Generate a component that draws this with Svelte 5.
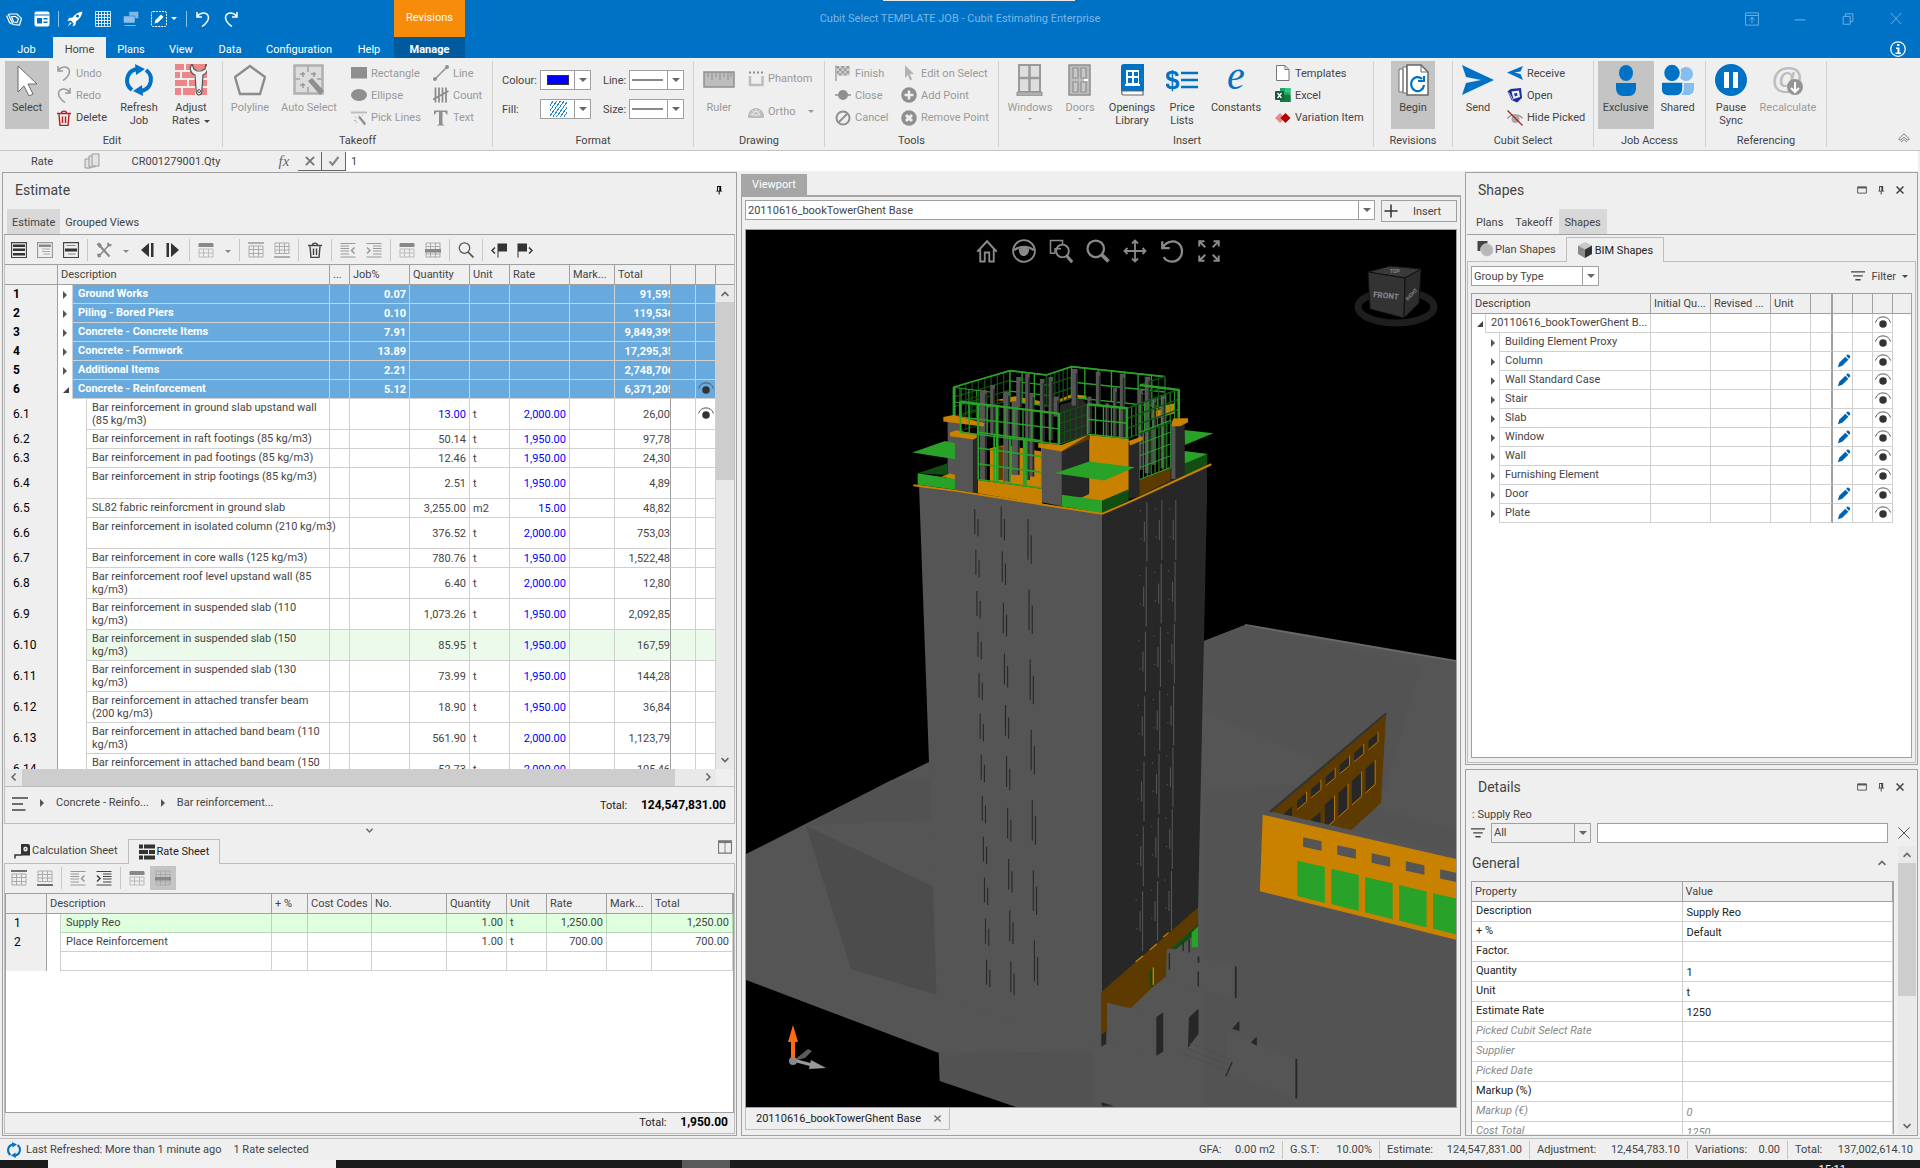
<script lang="ts">
    const icons: Record<string, string> = {
        // title bar
        logo: `<g fill="none" stroke="#fff" stroke-width="2.400"><path d="M1 9l6 14 4 3M5 7l9 20 13 1 4-13-9-9-13 0z"/><path d="M11 11l8 0 6 5-3 7-7-1z"/></g>`,
        form: `<rect x="1" y="1" width="30" height="30" rx="4" fill="#fff"/><path d="M1 8h30" stroke="#0072c6" stroke-width="2"/><path d="M6 14h10v11H6zM19 14h8v3h-8zM19 21h8v3h-8z" fill="#0072c6"/>`,
        rocket: `<path d="M31 1C22 2 16 6 11 13L4 14 1 20l7-1 5 6-2 6 6-3 1-7C25 16 30 10 31 1z" fill="#fff"/><circle cx="21" cy="10" r="3" fill="#0072c6"/><path d="M7 22l-6 9 8-6z" fill="#fff"/>`,
        gridw: `<path d="M1 1h30v30H1zM7 1v30M13 1v30M19 1v30M25 1v30M1 7h30M1 13h30M1 19h30M1 25h30" fill="none" stroke="#fff" stroke-width="1.6"/>`,
        cascade: `<path d="M12 1h19v14H12z" fill="#7fb8e2" stroke="#0072c6"/><path d="M1 10h23v14H1z" fill="#8cc0e6" stroke="#0072c6"/><path d="M3 29h22" stroke="#7fb8e2" stroke-width="2"/>`,
        pencilbox: `<rect x="1" y="1" width="30" height="30" rx="3" fill="none" stroke="#fff" stroke-width="2" stroke-dasharray="4 2"/><path d="M7 25l2-7L20 7l5 5-11 11z" fill="#fff"/>`,
        undo: `<path d="M4 2v10h10M4 12C10 2 22 2 26 9c3 7-1 14-12 22" fill="none" stroke="currentColor" stroke-width="3"/>`,
        redo: `<path d="M28 2v10H18M28 12C22 2 10 2 6 9c-3 7 1 14 12 22" fill="none" stroke="currentColor" stroke-width="3"/>`,
        // ribbon
        select: `<path d="M7 2v26l6-6 5 10 4-2-5-10h9z" fill="#fff" stroke="#6a6a6a"/>`,
        refresh: `<g fill="none" stroke="#0072c6" stroke-width="4"><path d="M13 5C3 8 1 20 9 26M19 27c10-3 12-15 4-21"/></g><path d="M12 0l10 5-9 6zM20 32l-10-5 9-6z" fill="#0072c6"/>`,
        bricks: `<path d="M0 0h9v6H0zM11 0h21v6H11zM0 8h5v6H0zM7 8h12v6H7zM24 8h8v6h-8zM0 16h12v6H0zM14 16h18v6H14zM0 24h6v7H0zM8 24h12v7H8zM25 24h7v7h-7z" fill="#eb8787"/><path d="M17 0c-3 4-2 9 3 11l1 14c0 8 6 8 6 0l1-14c5-2 6-7 3-11l-1 5-4 2h-4l-3-2z" fill="#efefef" stroke="#555" stroke-width="1.2"/><circle cx="24" cy="27" r="1.5" fill="none" stroke="#555"/>`,
        polyline: `<path d="M16 2l15 11-5 17H6L1 13z" fill="none" stroke="#8c8c8c" stroke-width="2.4"/>`,
        autoselect: `<rect x="1.500" y="1.500" width="28" height="28" fill="#dcdcdc" stroke="#b0b0b0" stroke-width="2.500"/><path d="M15 2v6M15 23v6M2 15h5M24 15h6" stroke="#b0b0b0" stroke-width="2"/><path d="M15 17l4-3 12 13-4 4z" fill="#8f8f8f"/><path d="M10 8v5M7 10h5M21 8v5M18 10h5M10 19v5M7 21h5" stroke="#9a9a9a" stroke-width="1.500"/>`,
        rect: `<path d="M0 4h32v23H0z" fill="#8f8f8f"/>`,
        ellipse: `<ellipse cx="16" cy="16" rx="16" ry="12" fill="#8f8f8f"/>`,
        picklines: `<path d="M0 3h32v4H0z" fill="#bdbdbd"/><path d="M14 15l4-3 12 15-3 4z" fill="#8f8f8f"/><path d="M8 13l3 3M16 10v3M6 21h4M22 12l2-2M10 26l2-3" stroke="#b0b0b0" stroke-width="2"/>`,
        line: `<path d="M4 28L28 4" stroke="#8f8f8f" stroke-width="3"/><circle cx="4" cy="28" r="4" fill="#8f8f8f"/><circle cx="28" cy="4" r="4" fill="#8f8f8f"/>`,
        count: `<path d="M5 1v30M12 1v30M19 1v30M26 1v30M0 25L31 8" stroke="#8a8a8a" stroke-width="3.500"/>`,
        text: `<path d="M2 1h27v8h-2c-1-4-3-5-6-5h-2v22c0 3 1 4 4 4v1H8v-1c3 0 4-1 4-4V4h-2C7 4 5 5 4 9H2z" fill="#8f8f8f"/>`,
        trash: `<path d="M6 9l2 22h16l2-22M2 7h28M11 6c0-5 10-5 10 0M13 13v13M19 13v13" fill="none" stroke="currentColor" stroke-width="2.800"/>`,
        ruler: `<path d="M1 8h30v15H1z" fill="#bdbdbd" stroke="#8f8f8f" stroke-width="1.500"/><path d="M5 8v5M9 8v8M13 8v5M17 8v8M21 8v5M25 8v8M28 8v5" stroke="#8f8f8f"/>`,
        phantom: `<path d="M4 10v18h25V10" fill="none" stroke="#bdbdbd" stroke-width="5"/><path d="M2 3h30" stroke="#8f8f8f" stroke-width="4" stroke-dasharray="4 4"/>`,
        ortho: `<path d="M1 24a15 15 0 0 1 30 0v3H1z" fill="#bdbdbd" stroke="#a0a0a0"/><path d="M9 22a7 7 0 0 1 14 0zM5 20l3 1M9 13l2 3M16 10v4M23 13l-2 3" fill="none" stroke="#efefef" stroke-width="2"/>`,
        flag: `<path d="M2 1v31" stroke="#8f8f8f" stroke-width="2.500"/><path d="M3 2h27v19H3z" fill="#d0d0d0"/><path d="M3 2h5v5H3zM13 2h5v5h-5zM23 2h5v5h-5zM8 7h5v5H8zM18 7h5v5h-5zM3 12h5v5H3zM13 12h5v5h-5zM23 12h5v5h-5zM8 17h5v4H8zM18 17h5v4h-5z" fill="#9a9a9a"/>`,
        closept: `<path d="M0 16h32" stroke="#a8a8a8" stroke-width="4"/><circle cx="16" cy="16" r="10" fill="#8f8f8f"/>`,
        cancel: `<circle cx="16" cy="16" r="13" fill="none" stroke="#8f8f8f" stroke-width="4"/><path d="M7 25L25 7" stroke="#8f8f8f" stroke-width="4"/>`,
        cursor: `<path d="M8 0v26l6-6 4 11 4-2-4-11h8z" fill="#b3b3b3"/>`,
        addpt: `<circle cx="16" cy="16" r="15.500" fill="#8f8f8f"/><path d="M16 7v18M7 16h18" stroke="#efefef" stroke-width="5"/>`,
        rempt: `<circle cx="16" cy="16" r="15.500" fill="#8f8f8f"/><path d="M10 10l12 12M22 10L10 22" stroke="#efefef" stroke-width="6"/>`,
        windows: `<path d="M5 1h21v27H5z" fill="#dedede" stroke="#9a9a9a" stroke-width="2"/><path d="M15.500 1v27M5 14h21" stroke="#9a9a9a" stroke-width="2.500"/><path d="M3 28h25v4H3z" fill="#b0b0b0" stroke="#8f8f8f"/>`,
        doors: `<path d="M5 1h21v30H5z" fill="#bdbdbd" stroke="#8f8f8f" stroke-width="1.500"/><path d="M9 4h5v10H9zM17 4h5v10h-5zM9 18h5v10H9zM17 18h5v10h-5z" fill="#c8c8c8" stroke="#8f8f8f" stroke-width="1.200"/><path d="M20 15h4v2h-4z" fill="#fff"/>`,
        openings: `<path d="M5 3c0-2 1-3 3-3h20v27H5z" fill="#0072c6"/><path d="M6 27h21v4H8c-2 0-3-2-2-4z" fill="#fff" stroke="#666" stroke-width="1.200"/><path d="M10 6h13v14H10z" fill="#fff"/><path d="M12 8h4v4h-4zM18 8h4v4h-4zM12 14h4v5h-4zM18 14h4v5h-4z" fill="#0072c6"/><path d="M9 20h15v2H9z" fill="#fff"/>`,
        price: `<text x="-1" y="25" font-family="Liberation Sans, sans-serif" font-weight="700" font-size="26" fill="#0072c6">$</text><path d="M15 9h17M15 16h17M15 23h17" stroke="#0072c6" stroke-width="2.500"/>`,
        constants: `<text x="16" y="25" text-anchor="middle" font-family="Liberation Serif, serif" font-style="italic" font-size="40" fill="#0072c6">e</text>`,
        template: `<path d="M3 1h17l8 8v22H3z" fill="#fff" stroke="#777" stroke-width="2"/><path d="M20 1v8h8" fill="none" stroke="#777" stroke-width="2"/>`,
        excel: `<path d="M10 2h21v28H10z" fill="#21a366"/><path d="M20 2h11v9H20zM10 20h21v10H10z" fill="#33c481"/><path d="M10 16h21v14H10z" fill="#107c41"/><rect x="0" y="8" width="18" height="18" rx="2" fill="#185c37"/><path d="M5 12l8 10M13 12L5 22" stroke="#fff" stroke-width="2.500"/>`,
        variation: `<path d="M10 6l10 10-10 10L0 16z" fill="#eb8787"/><path d="M21 6l10 10-10 10-10-10z" fill="#b40000"/>`,
        begin: `<path d="M2 5h4v23H2zM6 3h4v26H6z" fill="#fff" stroke="#777"/><path d="M10 1h14l7 7v23H10z" fill="#fff" stroke="#666" stroke-width="1.500"/><path d="M24 1v7h7" fill="none" stroke="#666"/><path d="M25 15a6.500 7 0 1 0 2 6M27 12v5h-6" fill="none" stroke="#0072c6" stroke-width="2.200"/>`,
        send: `<path d="M0 1l32 15L0 31l4-12 15-3-15-3z" fill="#0072c6"/>`,
        receive: `<path d="M32 2L0 15l32 15-5-12-12-3 12-2z" fill="#0072c6"/>`,
        open: `<path d="M1 9l6-5 21-2 2 20-10 9-11-5z" fill="#1b2f9c"/><path d="M9 9l15-2 2 13-13 4z" fill="#efefef"/><path d="M14 13l6-1 1 5-5 2z" fill="#1b2f9c"/><path d="M3 11l9 15" stroke="#efefef" stroke-width="1.500"/>`,
        hide: `<path d="M1 17c6-10 24-10 30 0" fill="none" stroke="#8f8f8f" stroke-width="2.500"/><circle cx="17" cy="18" r="8" fill="#a8a8a8"/><path d="M1 1l30 30" stroke="#b81c1c" stroke-width="2.500"/>`,
        exclusive: `<ellipse cx="16" cy="9" rx="7" ry="8" fill="#0072c6"/><path d="M6 19h20v5c0 5-3 8-7 8h-6c-4 0-7-3-7-8z" fill="#0072c6"/>`,
        shared: `<ellipse cx="24" cy="10" rx="7" ry="7" fill="#86bdee"/><path d="M17 19h15v5c0 5-3 7-6 7h-9z" fill="#86bdee"/><ellipse cx="10" cy="9" rx="8.500" ry="9" fill="#0072c6" stroke="#efefef" stroke-width="1.500"/><path d="M-1 18h22v6c0 5-3 8-7 8H6c-4 0-7-3-7-8z" fill="#0072c6" stroke="#efefef" stroke-width="1.500"/>`,
        pause: `<circle cx="16" cy="16" r="16" fill="#0072c6"/><path d="M9 8h5v16H9zM18 8h5v16h-5z" fill="#fff"/>`,
        recalc: `<text x="15" y="25" text-anchor="middle" font-family="Liberation Sans, sans-serif" font-weight="700" font-size="32" fill="#bdbdbd">@</text><circle cx="23" cy="23" r="8" fill="#949494"/><path d="M23 18v9M19 24l4 4 4-4" stroke="#fff" stroke-width="2" fill="none"/>`,
        copy: `<g fill="#e4e4e4" stroke="#999" stroke-width="2"><path d="M2 12h12v18H2z"/><path d="M10 6h12v22H10z"/><path d="M16 2h14v24H16z"/></g>`,
        // grid toolbars
        rows: `<path d="M1 1h30v30H1z" fill="none" stroke="#444" stroke-width="2.500"/><path d="M4 5h24v5H4zM4 13h24v5H4zM4 22h24v5H4z" fill="#333"/>`,
        rowtop: `<path d="M1 1h30v30H1z" fill="none" stroke="#999" stroke-width="2.500"/><path d="M4 5h24v5H4z" fill="#888"/><path d="M10 14h16M10 19h16M13 24h13" stroke="#aaa" stroke-width="2"/>`,
        rowmid: `<path d="M1 1h30v30H1z" fill="none" stroke="#444" stroke-width="2.500"/><path d="M4 13h24v6H4z" fill="#333"/><path d="M7 7h18M10 24h15" stroke="#888" stroke-width="2"/>`,
        tools: `<path d="M7 7l20 22" stroke="#888" stroke-width="4"/><path d="M27 5L6 28" stroke="#888" stroke-width="3"/><path d="M1 4l6-3 5 6-5 5zM22 1l1 7 7 1 2-5-4 1-2-3zM2 24l6-1 2 7-6 1z" fill="#888"/>`,
        prev: `<path d="M20 2v28L4 16zM24 2h5v28h-5z" fill="#333"/>`,
        next: `<path d="M12 2v28l16-14zM3 2h5v28H3z" fill="#333"/>`,
        tblhead: `<path d="M1 10V5c0-2 1-3 3-3h24c2 0 3 1 3 3v5z" fill="#888"/><path d="M2 14h28v16H2zM2 22h28M11 14v16M21 14v16" fill="none" stroke="#bbb" stroke-width="2"/>`,
        tbltop: `<path d="M0 2h32" stroke="currentColor" stroke-width="3"/><path d="M2 8h28v22H2zM2 15h28M2 23h28M11 8v22M21 8v22" fill="none" stroke="#aaa" stroke-width="2"/>`,
        tblbot: `<path d="M0 30h32" stroke="currentColor" stroke-width="3"/><path d="M2 2h28v21H2zM2 9h28M2 16h28M11 2v21M21 2v21" fill="none" stroke="#aaa" stroke-width="2"/>`,
        outdent: `<path d="M1 3h30M1 30h30M1 8h17M1 13h17M1 18h17M1 24h17" stroke="currentColor" stroke-width="2.400"/><path d="M29 11l-6 6 6 6" fill="none" stroke="currentColor" stroke-width="3"/>`,
        indent: `<path d="M1 3h30M1 30h30M14 8h17M14 13h17M14 18h17M14 24h17" stroke="currentColor" stroke-width="2.400"/><path d="M2 11l6 6-6 6" fill="none" stroke="currentColor" stroke-width="3"/>`,
        tblmid: `<path d="M2 2h28v28H2zM2 9h28M2 24h28M11 2v28M21 2v28" fill="none" stroke="#aaa" stroke-width="2"/><path d="M0 14h32v7H0z" fill="#888"/>`,
        find: `<circle cx="13" cy="12" r="10.500" fill="none" stroke="#555" stroke-width="2.500"/><path d="M20 20l11 11" stroke="#555" stroke-width="3.500"/>`,
        flagl: `<path d="M13 3h19v16H15v12h-2z" fill="#333"/><path d="M8 11l-6 6 6 6" fill="none" stroke="#333" stroke-width="3"/>`,
        flagr: `<path d="M1 3h19v16H3v12H1z" fill="#333"/><path d="M24 11l6 6-6 6" fill="none" stroke="#333" stroke-width="3"/>`,
        tape: `<path d="M14 2h14c2 0 4 2 4 4v19H14z" fill="#333"/><ellipse cx="23" cy="12" rx="4.500" ry="5" fill="#efefef"/><circle cx="23" cy="12" r="1.500" fill="#333"/><path d="M2 31v-7h13" fill="none" stroke="#333" stroke-width="3"/>`,
        brick: `<path d="M0 1h8v8H0zM10 1h22v8H10zM0 12h18v8H0zM20 12h12v8H20zM0 23h8v8H0zM10 23h22v8H10z" fill="#333"/>`,
        cols: `<path d="M1 2h30v28H1z" fill="none" stroke="#777" stroke-width="3"/><path d="M1 2h30v5H1z" fill="#777"/><path d="M16 4v26" stroke="#777" stroke-width="2"/>`,
        planshapes: `<path d="M1 0h20v20H1z" fill="#444"/><circle cx="20" cy="18" r="13" fill="#b8b8b8" stroke="#efefef"/>`,
        cube: `<path d="M16 0l14 7-14 8L2 7z" fill="#c8c8c8"/><path d="M2 7l14 8v17L2 24z" fill="#8a8a8a"/><path d="M30 7L16 15v17l14-8z" fill="#333"/>`,
        filter: `<path d="M0 5h32v3H0zM5 14h22v3H5zM10 23h12v3H10z" fill="#444"/>`,
        menu: `<path d="M0 4h32M0 16h22M0 28h27" stroke="#444" stroke-width="3"/>`,
        eye: `<path d="M1 15c4-15 26-15 30 0" fill="none" stroke="#555" stroke-width="2"/><circle cx="16" cy="18" r="7.500" fill="#333"/>`,
        edit: `<path d="M2 30l3-10L19 6l7 7-14 14zM21 4l3-3c2-1 8 4 6 7l-3 3z" fill="#0063b1"/>`,
        pin: `<path d="M10 3h13v15h3v3h-8v9h-3v-9H7v-3h3z" fill="currentColor"/><path d="M13 6h4v12h-4z" fill="#efefef"/>`,
        max: `<path d="M2 6h28v20H2z" fill="none" stroke="#555" stroke-width="3"/><path d="M2 6h28v5H2z" fill="#555"/>`,
        x: `<path d="M5 5l22 22M27 5L5 27" stroke="currentColor" stroke-width="5"/>`,
        xthin: `<path d="M1 1l30 30M31 1L1 31" stroke="#444" stroke-width="2.400"/>`,
        check: `<path d="M4 17l8 9L28 5" fill="none" stroke="#888" stroke-width="6"/>`,
        up: `<path d="M5 22l11-11 11 11" fill="none" stroke="#666" stroke-width="5"/>`,
        down: `<path d="M5 10l11 11 11-11" fill="none" stroke="#666" stroke-width="5"/>`,
        left: `<path d="M21 5L10 16l11 11" fill="none" stroke="#666" stroke-width="5"/>`,
        right: `<path d="M11 5l11 11-11 11" fill="none" stroke="#666" stroke-width="5"/>`,
        plus: `<path d="M16 1v30M1 16h30" stroke="#333" stroke-width="3.500"/>`,
        collapse: `<path d="M3 17L16 5l13 12M3 17v4h5l8-7 8 7h5v-4M8 27l8-7 8 7" fill="none" stroke="#777" stroke-width="2.500"/>`,
        info: `<circle cx="16" cy="16" r="14.500" fill="none" stroke="#fff" stroke-width="2.500"/><path d="M14 6h5v4h-5zM12 13h7v10h3v3H11v-3h4v-7h-3z" fill="#fff"/>`,
        wribbon: `<path d="M1 2h30v28H1zM1 8h30M16 26V12M10 18l6-6 6 6" fill="none" stroke="#6fb1e3" stroke-width="2.200"/>`,
        wmin: `<path d="M4 18h24" stroke="#6fb1e3" stroke-width="2.400"/>`,
        wmax: `<path d="M5 10h16v18H5zM10 10V4h17v18h-6" fill="none" stroke="#6fb1e3" stroke-width="2.200"/>`,
        wclose: `<path d="M4 2l24 26M28 2L4 28" stroke="#6fb1e3" stroke-width="2.200"/>`,
        // viewport overlay
        home: `<path d="M3 17L16 3l13 14M7 14v16h6V18h6v12h6V14" fill="none" stroke="#8a8a8a" stroke-width="2.500"/>`,
        look: `<circle cx="16" cy="16" r="14.500" fill="none" stroke="#8a8a8a" stroke-width="2.500"/><path d="M3 15c7-6 19-6 26 0" fill="none" stroke="#8a8a8a" stroke-width="3"/><path d="M9 13c5-2 9-2 14 0 0 12-14 14-14 0z" fill="#8a8a8a"/>`,
        zoomwin: `<path d="M8 19H2V2h16v5M8 19v-6h8" fill="none" stroke="#8a8a8a" stroke-width="2"/><circle cx="18" cy="16" r="8.500" fill="none" stroke="#8a8a8a" stroke-width="2.500"/><path d="M24 23l7 8" stroke="#8a8a8a" stroke-width="4"/>`,
        zoom: `<circle cx="13" cy="13" r="11" fill="none" stroke="#8a8a8a" stroke-width="3"/><path d="M21 21l9 9" stroke="#8a8a8a" stroke-width="5"/>`,
        move: `<path d="M16 2v28M2 16h28M12 6l4-4 4 4M12 26l4 4 4-4M6 12l-4 4 4 4M26 12l4 4-4 4" fill="none" stroke="#8a8a8a" stroke-width="2.400"/>`,
        rotate: `<path d="M3 3v9h10M4 11C9 2 22 0 28 10c4 10-2 20-12 20-6 0-9-2-11-6" fill="none" stroke="#8a8a8a" stroke-width="3"/>`,
        fit: `<path d="M3 10V3h7M3 3l8 8M22 3h7v7M29 3l-8 8M3 22v7h7M3 29l8-8M29 22v7h-7M29 29l-8-8" fill="none" stroke="#8a8a8a" stroke-width="2.600"/>`,
    };

    const quickAccess = ["logo", "form", "|", "rocket", "gridw", "cascade", "pencilbox", "v", "|", "undo", "redo"];

    const tabs = [
        { name: "Job", w: 53 },
        { name: "Home", w: 53 },
        { name: "Plans", w: 50 },
        { name: "View", w: 50 },
        { name: "Data", w: 48 },
        { name: "Configuration", w: 90 },
        { name: "Help", w: 50 },
        { name: "Manage", w: 71 },
    ];

    const estimateTools = ["rows", "rowtop", "rowmid", "|", "tools", "v", "prev", "next", "|", "tblhead", "v", "|", "tbltop", "tblbot", "|", "trash", "|", "outdent", "indent", "|", "tblhead", "tblmid", "|", "find", "|", "flagl", "flagr"];
    const rateTools = ["tbltop", "tblbot", "|", "outdent", "indent", "|", "tblhead", "tblmid"];
    const darkTools = ["trash"];
    const rateDark = ["tbltop", "tblbot", "indent"];

    const groups = [
        { n: 1, name: "Ground Works", job: "0.07", total: "91,595" },
        { n: 2, name: "Piling - Bored Piers", job: "0.10", total: "119,536" },
        { n: 3, name: "Concrete - Concrete Items", job: "7.91", total: "9,849,399" },
        { n: 4, name: "Concrete - Formwork", job: "13.89", total: "17,295,35" },
        { n: 5, name: "Additional Items", job: "2.21", total: "2,748,706" },
        { n: 6, name: "Concrete - Reinforcement", job: "5.12", total: "6,371,205", open: true },
    ];

    const items = [
        { n: "6.1", name: "Bar reinforcement in ground slab upstand wall (85 kg/m3)", qty: "13.00", unit: "t", rate: "2,000.00", total: "26,00", tall: true, eye: true },
        { n: "6.2", name: "Bar reinforcement in raft footings (85 kg/m3)", qty: "50.14", unit: "t", rate: "1,950.00", total: "97,78" },
        { n: "6.3", name: "Bar reinforcement in pad footings (85 kg/m3)", qty: "12.46", unit: "t", rate: "1,950.00", total: "24,30" },
        { n: "6.4", name: "Bar reinforcement in strip footings (85 kg/m3)", qty: "2.51", unit: "t", rate: "1,950.00", total: "4,89", tall: true, single: true },
        { n: "6.5", name: "SL82 fabric reinforcment in ground slab", qty: "3,255.00", unit: "m2", rate: "15.00", total: "48,82" },
        { n: "6.6", name: "Bar reinforcement in isolated column (210 kg/m3)", qty: "376.52", unit: "t", rate: "2,000.00", total: "753,03", tall: true, single: true },
        { n: "6.7", name: "Bar reinforcement in core walls (125 kg/m3)", qty: "780.76", unit: "t", rate: "1,950.00", total: "1,522,48" },
        { n: "6.8", name: "Bar reinforcement roof level upstand wall (85 kg/m3)", qty: "6.40", unit: "t", rate: "2,000.00", total: "12,80", tall: true },
        { n: "6.9", name: "Bar reinforcement in suspended slab (110 kg/m3)", qty: "1,073.26", unit: "t", rate: "1,950.00", total: "2,092,85", tall: true },
        { n: "6.10", name: "Bar reinforcement in suspended slab (150 kg/m3)", qty: "85.95", unit: "t", rate: "1,950.00", total: "167,59", tall: true, active: true },
        { n: "6.11", name: "Bar reinforcement in suspended slab (130 kg/m3)", qty: "73.99", unit: "t", rate: "1,950.00", total: "144,28", tall: true },
        { n: "6.12", name: "Bar reinforcement in attached transfer beam (200 kg/m3)", qty: "18.90", unit: "t", rate: "1,950.00", total: "36,84", tall: true },
        { n: "6.13", name: "Bar reinforcement in attached band beam (110 kg/m3)", qty: "561.90", unit: "t", rate: "2,000.00", total: "1,123,79", tall: true },
        { n: "6.14", name: "Bar reinforcement in attached band beam (150 kg/m3)", qty: "52.73", unit: "t", rate: "2,000.00", total: "105,46", tall: true },
    ];

    const shapes = [
        { name: "Building Element Proxy" },
        { name: "Column", edit: true },
        { name: "Wall Standard Case", edit: true },
        { name: "Stair" },
        { name: "Slab", edit: true },
        { name: "Window", edit: true },
        { name: "Wall", edit: true },
        { name: "Furnishing Element" },
        { name: "Door", edit: true },
        { name: "Plate", edit: true },
    ];

    const properties = [
        { name: "Description", value: "Supply Reo" },
        { name: "+ %", value: "Default" },
        { name: "Factor.", value: "" },
        { name: "Quantity", value: "1" },
        { name: "Unit", value: "t" },
        { name: "Estimate Rate", value: "1250" },
        { name: "Picked Cubit Select Rate", value: "", locked: true },
        { name: "Supplier", value: "", locked: true },
        { name: "Picked Date", value: "", locked: true },
        { name: "Markup (%)", value: "" },
        { name: "Markup (€)", value: "0", locked: true },
        { name: "Cost Total", value: "1250", locked: true },
    ];

    const totals = [
        { label: "GFA:", value: "0.00 m2", w: 90 },
        { label: "G.S.T:", value: "10.00%", w: 97 },
        { label: "Estimate:", value: "124,547,831.00", w: 150 },
        { label: "Adjustment:", value: "12,454,783.10", w: 158 },
        { label: "Variations:", value: "0.00", w: 100 },
        { label: "Total:", value: "137,002,614.10", w: 133 },
    ];

    // model geometry

    const GREEN = "#28a228";
    const DARK_GREEN = "#124d12";
    const ORANGE = "#c98200";
    const BROWN = "#5c3a00";
    const GREY = "#555";
    const DARK = "#272727";

    // railing panel between two posts: nv bays across, nh bays down
    const fence = (x1, y1, x2, y2, h, nv, nh) => {
        let d = "";
        for (let i = 0; i <= nv; i++) {
            const x = x1 + ((x2 - x1) * i) / nv;
            const y = y1 + ((y2 - y1) * i) / nv;
            d += `M${x} ${y}v${h}`;
        }
        for (let j = 0; j <= nh; j++) {
            const o = (h * j) / nh;
            d += `M${x1} ${y1 + o}L${x2} ${y2 + o}`;
        }
        return d;
    };

    const backFences = [
        { d: fence(145, 97, 315, 47, 88, 9, 3), c: DARK_GREEN, w: 4 },
        { d: fence(315, 47, 425, 60, 92, 3, 3), c: GREEN, w: 4 },
        { d: fence(425, 60, 500, 35, 95, 6, 3), c: DARK_GREEN, w: 4 },
        { d: fence(500, 35, 780, 65, 92, 7, 2), c: GREEN, w: 4 },
        { d: "M145 97L315 47L425 60L500 35L780 65", c: GREEN, w: 5 },
        { d: fence(705, 90, 780, 65, 92, 4, 3), c: DARK_GREEN, w: 4 },
        { d: fence(145, 97, 262, 112, 88, 5, 2), c: GREEN, w: 3 },
        { d: fence(166, 140, 262, 110, 88, 6, 2), c: DARK_GREEN, w: 3 },
        { d: "M148 97v88M166 140v88", c: GREEN, w: 8 },
    ];

    const frontFences = [
        { d: fence(166, 140, 462, 176, 92, 11, 2), c: GREEN, w: 4 },
        { d: fence(220, 232, 411, 258, 142, 4, 3), c: GREEN, w: 5 },
        { d: fence(462, 176, 548, 148, 92, 5, 3), c: DARK_GREEN, w: 4 },
        { d: fence(548, 148, 668, 160, 90, 5, 2), c: GREEN, w: 4 },
        { d: fence(668, 160, 822, 103, 90, 12, 3), c: GREEN, w: 3 },
        { d: fence(704, 232, 798, 196, 142, 8, 4), c: GREEN, w: 3 },
        { d: fence(668, 160, 822, 103, 90, 1, 3), c: DARK_GREEN, w: 4 },
        { d: "M705 90L822 105M166 140L462 176M548 148L668 160", c: GREEN, w: 7 },
        { d: "M462 174v94M666 158v92M277 150v230M358 250v140M220 150v90M822 103v86", c: GREEN, w: 8 },
    ];

    const masts = [
        [225, 105, 20, 270], [256, 90, 14, 150], [295, 110, 20, 270], [320, 140, 24, 220], [334, 66, 16, 90],
        [361, 55, 14, 320], [374, 115, 14, 250], [405, 72, 14, 190], [431, 66, 14, 190], [446, 125, 16, 60],
        [500, 42, 18, 110], [573, 50, 14, 100], [602, 145, 10, 100], [625, 98, 12, 145], [645, 56, 14, 190],
        [548, 125, 12, 110], [700, 105, 14, 240], [720, 65, 16, 290], [742, 130, 12, 200], [768, 120, 14, 220],
    ];

    const slits: { x: number; y: number; h: number }[] = [];
    for (const [x, y, step, len, drift] of [[208, 27, 123, 75, 3], [282, 0, 154, 92, 3], [357, 57, 211, 122, 3]]) {
        for (let i = 0; y + i * step < 1500; i++) {
            const sy = Math.max(y + i * step, 20);
            slits.push({ x: x + i * drift, y: sy, h: len });
            slits.push({ x: x + 9 + i * drift, y: sy + len * 0.4, h: len * 0.7 });
        }
    }

    const seams: { x: number; y: number; h: number }[] = [];
    for (const [x, start, end] of [[690, 5, 1370], [732, 0, 1335], [771, 0, 1300]]) {
        for (let i = 0; i < 7; i++) {
            const y = start + (i * (end - start)) / 7;
            seams.push({ x: x - i * 2, y, h: 180 });
            seams.push({ x: x - 7 - i * 2, y: y + 60, h: 60 });
            seams.push({ x: x - 18 - i * 2, y: y + 25, h: 4 });
            seams.push({ x: x - 16 - i * 2, y: y + 110, h: 4 });
        }
    }
</script>

{#snippet icon(name, cls = "")}
    <svg class="icon {cls}" viewBox="0 0 32 32" aria-hidden="true">{@html icons[name]}</svg>
{/snippet}

{#snippet big(name, label, cls = "", caret = false)}
    <button class="big {cls}">
        {@render icon(name)}
        <span>{label}{#if caret}<i class="caret"></i>{/if}</span>
    </button>
{/snippet}

{#snippet small(name, label, cls = "")}
    <button class="small {cls}">{@render icon(name)}{label}</button>
{/snippet}

{#snippet toolbar(names, dark, active)}
    <div class="toolbar">
        {#each names as name, i}
            {#if name === "|"}
                <i class="sep"></i>
            {:else if name === "v"}
                <button class="drop" aria-label="More"><i class="caret"></i></button>
            {:else}
                <button class="tool" class:dark={dark.includes(name)} class:active={i === active} aria-label={name}>{@render icon(name)}</button>
            {/if}
        {/each}
    </div>
{/snippet}

{#snippet windowButtons()}
    <div class="pane-buttons">
        <button aria-label="Maximise">{@render icon("max")}</button>
        <button aria-label="Pin">{@render icon("pin")}</button>
        <button aria-label="Close">{@render icon("x")}</button>
    </div>
{/snippet}

<div class="app">
    <header>
        <i class="edge"></i>
        <div class="titlebar">
            <div class="title-left">
                <div class="quick">
                    {#each quickAccess as name}
                        {#if name === "|"}
                            <i class="qsep"></i>
                        {:else if name === "v"}
                            <i class="caret"></i>
                        {:else}
                            <button aria-label={name}>{@render icon(name)}</button>
                        {/if}
                    {/each}
                </div>
                <span class="context">Revisions</span>
            </div>
            <h1>Cubit Select TEMPLATE JOB - Cubit Estimating Enterprise</h1>
            <div class="window-buttons">
                {#each ["wribbon", "wmin", "wmax", "wclose"] as name}
                    <button aria-label={name.slice(1)}>{@render icon(name)}</button>
                {/each}
            </div>
        </div>
        <nav>
            {#each tabs as tab}
                <button class:home={tab.name === "Home"} class:manage={tab.name === "Manage"} style="width: {tab.w}px">{tab.name}</button>
            {/each}
            <button class="info" aria-label="Info">{@render icon("info")}</button>
        </nav>
    </header>

    <div class="ribbon">
        <section class="g-edit">
            <div class="body">
                {@render big("select", "Select", "w44 on")}
                <div class="stack w64">
                    {@render small("undo", "Undo", "off")}
                    {@render small("redo", "Redo", "off")}
                    {@render small("trash", "Delete", "red")}
                </div>
                {@render big("refresh", "Refresh Job", "w52")}
                {@render big("bricks", "Adjust Rates", "w52", true)}
            </div>
            <h2>Edit</h2>
        </section>
        <section class="g-takeoff">
            <div class="body">
                {@render big("polyline", "Polyline", "w48 off")}
                {@render big("autoselect", "Auto Select", "w70 off")}
                <div class="stack w82">
                    {@render small("rect", "Rectangle", "off")}
                    {@render small("ellipse", "Ellipse", "off")}
                    {@render small("picklines", "Pick Lines", "off")}
                </div>
                <div class="stack">
                    {@render small("line", "Line", "off")}
                    {@render small("count", "Count", "off")}
                    {@render small("text", "Text", "off")}
                </div>
            </div>
            <h2>Takeoff</h2>
        </section>
        <section class="g-format">
            <div class="body format">
                <label for="colour">Colour:</label>
                <div class="combo swatch">
                    <select id="colour"></select><i class="arrow"></i><i class="fill-blue"></i>
                </div>
                <label for="line">Line:</label>
                <div class="combo swatch">
                    <select id="line"></select><i class="arrow"></i><i class="stroke"></i>
                </div>
                <label for="fill">Fill:</label>
                <div class="combo swatch">
                    <select id="fill"></select><i class="arrow"></i><i class="hatch"></i>
                </div>
                <label for="size">Size:</label>
                <div class="combo swatch">
                    <select id="size"></select><i class="arrow"></i><i class="stroke"></i>
                </div>
            </div>
            <h2>Format</h2>
        </section>
        <section class="g-drawing">
            <div class="body">
                {@render big("ruler", "Ruler", "w44 off")}
                <div class="stack two">
                    {@render small("phantom", "Phantom", "off")}
                    <button class="small off">{@render icon("ortho")}Ortho<i class="caret far"></i></button>
                </div>
            </div>
            <h2>Drawing</h2>
        </section>
        <section class="g-tools">
            <div class="body">
                <div class="stack w66">
                    {@render small("flag", "Finish", "off")}
                    {@render small("closept", "Close", "off")}
                    {@render small("cancel", "Cancel", "off")}
                </div>
                <div class="stack">
                    {@render small("cursor", "Edit on Select", "off")}
                    {@render small("addpt", "Add Point", "off")}
                    {@render small("rempt", "Remove Point", "off")}
                </div>
            </div>
            <h2>Tools</h2>
        </section>
        <section class="g-insert">
            <div class="body">
                {@render big("windows", "Windows", "w52 off under", true)}
                {@render big("doors", "Doors", "w48 off under", true)}
                {@render big("openings", "Openings Library", "w56")}
                {@render big("price", "Price Lists", "w44")}
                {@render big("constants", "Constants", "w64")}
                <div class="stack">
                    {@render small("template", "Templates")}
                    {@render small("excel", "Excel")}
                    {@render small("variation", "Variation Item")}
                </div>
            </div>
            <h2>Insert</h2>
        </section>
        <section class="g-revisions">
            <div class="body">{@render big("begin", "Begin", "w44 on")}</div>
            <h2>Revisions</h2>
        </section>
        <section class="g-cubit">
            <div class="body">
                {@render big("send", "Send", "w44")}
                <div class="stack">
                    {@render small("receive", "Receive")}
                    {@render small("open", "Open")}
                    {@render small("hide", "Hide Picked")}
                </div>
            </div>
            <h2>Cubit Select</h2>
        </section>
        <section class="g-access">
            <div class="body">
                {@render big("exclusive", "Exclusive", "w56 on")}
                {@render big("shared", "Shared", "w48")}
            </div>
            <h2>Job Access</h2>
        </section>
        <section class="g-ref">
            <div class="body">
                {@render big("pause", "Pause Sync", "w44")}
                {@render big("recalc", "Recalculate", "w70 off")}
            </div>
            <h2>Referencing</h2>
        </section>
        <button class="collapse" aria-label="Collapse the ribbon">{@render icon("collapse")}</button>
    </div>

    <div class="formula">
        <span class="f-kind">Rate</span>
        {@render icon("copy")}
        <label class="f-cell" for="formula">CR001279001.Qty</label>
        <span class="fx">fx</span>
        <button aria-label="Cancel">{@render icon("x")}</button>
        <button aria-label="Accept">{@render icon("check")}</button>
        <input id="formula" type="text" value="1" />
    </div>

    <main>
        <section class="pane estimate">
            <div class="pane-head">
                <h3>Estimate</h3>
                <div class="pane-buttons black">
                    <button aria-label="Pin">{@render icon("pin")}</button>
                </div>
            </div>
            <div class="views">
                <button class="current">Estimate</button>
                <button>Grouped Views</button>
            </div>
            <div class="box upper">
                {@render toolbar(estimateTools, darkTools, -1)}
                <div class="sheet">
                    <div class="scroller">
                        <table class="grid">
                            <colgroup>
                                <col class="c53" /><col class="c15" /><col class="c14" /><col />
                                <col class="c20" /><col class="c60" /><col class="c60" /><col class="c40" />
                                <col class="c60" /><col class="c45" /><col class="c56" /><col class="c25" /><col class="c20" />
                            </colgroup>
                            <thead>
                                <tr>
                                    <th></th>
                                    <th colspan="3">Description</th>
                                    <th>...</th>
                                    <th>Job%</th>
                                    <th>Quantity</th>
                                    <th>Unit</th>
                                    <th>Rate</th>
                                    <th>Mark...</th>
                                    <th>Total</th>
                                    <th></th>
                                    <th></th>
                                </tr>
                            </thead>
                            <tbody>
                                {#each groups as g}
                                    <tr class="group">
                                        <td class="num">{g.n}</td>
                                        <td class="twist"><i class={g.open ? "opened" : "closed"}></i></td>
                                        <td class="desc" colspan="2">{g.name}</td>
                                        <td></td>
                                        <td class="r">{g.job}</td>
                                        <td></td>
                                        <td></td>
                                        <td></td>
                                        <td></td>
                                        <td class="total"><span>{g.total}</span></td>
                                        <td></td>
                                        <td class="mark">{#if g.open}{@render icon("eye")}{/if}</td>
                                    </tr>
                                {/each}
                                {#each items as item, i}
                                    <tr class:tall={item.tall} class:active={item.active}>
                                        <td class="num">{item.n}</td>
                                        <td class="blank" colspan="2"></td>
                                        <td class="desc" class:single={item.single}>{item.name}</td>
                                        <td></td>
                                        <td></td>
                                        <td class="r" class:blue={i === 0}>{item.qty}</td>
                                        <td>{item.unit}</td>
                                        <td class="r blue">{item.rate}</td>
                                        <td></td>
                                        <td class="total"><span>{item.total}</span></td>
                                        <td></td>
                                        <td class="mark">{#if item.eye}{@render icon("eye")}{/if}</td>
                                    </tr>
                                {/each}
                            </tbody>
                        </table>
                    </div>
                    <div class="vscroll">
                        <span class="vhead"></span>
                        <button aria-label="Scroll up">{@render icon("up")}</button>
                        <span class="thumb"></span>
                        <span class="track"></span>
                        <button aria-label="Scroll down">{@render icon("down")}</button>
                    </div>
                </div>
                <div class="hscroll">
                    <button aria-label="Scroll left">{@render icon("left")}</button>
                    <span class="thumb"></span>
                    <span class="track"></span>
                    <button aria-label="Scroll right">{@render icon("right")}</button>
                    <span class="corner"></span>
                </div>
                <div class="crumbs">
                    {@render icon("menu")}
                    <i class="closed"></i>
                    <a href="#group">Concrete - Reinfo...</a>
                    <i class="closed"></i>
                    <a href="#item">Bar reinforcement...</a>
                    <span class="sum">Total: <b>124,547,831.00</b></span>
                </div>
            </div>
            <button class="splitter" aria-label="Collapse">{@render icon("down")}</button>
            <div class="tabs">
                <button>{@render icon("tape")}Calculation Sheet</button>
                <button class="current">{@render icon("brick")}Rate Sheet</button>
                {@render icon("cols", "end")}
            </div>
            <div class="box lower">
                {@render toolbar(rateTools, rateDark, 7)}
                <div class="scroller">
                    <table class="grid rate">
                        <colgroup>
                            <col class="c41" /><col class="c14" /><col />
                            <col class="c36" /><col class="c64" /><col class="c75" /><col class="c60" />
                            <col class="c40" /><col class="c60" /><col class="c45" /><col class="c81" />
                        </colgroup>
                        <thead>
                            <tr>
                                <th></th>
                                <th colspan="2">Description</th>
                                <th>+ %</th>
                                <th>Cost Codes</th>
                                <th>No.</th>
                                <th>Quantity</th>
                                <th>Unit</th>
                                <th>Rate</th>
                                <th>Mark...</th>
                                <th>Total</th>
                            </tr>
                        </thead>
                        <tbody>
                            <tr class="green">
                                <td class="num">1</td>
                                <td class="blank"></td>
                                <td class="desc">Supply Reo</td>
                                <td></td><td></td><td></td>
                                <td class="r">1.00</td>
                                <td>t</td>
                                <td class="r">1,250.00</td>
                                <td></td>
                                <td class="r">1,250.00</td>
                            </tr>
                            <tr>
                                <td class="num">2</td>
                                <td class="blank"></td>
                                <td class="desc">Place Reinforcement</td>
                                <td></td><td></td><td></td>
                                <td class="r">1.00</td>
                                <td>t</td>
                                <td class="r">700.00</td>
                                <td></td>
                                <td class="r">700.00</td>
                            </tr>
                            <tr>
                                <td class="num"></td>
                                <td class="blank"></td>
                                <td></td><td></td><td></td><td></td><td></td><td></td><td></td><td></td><td></td>
                            </tr>
                        </tbody>
                    </table>
                </div>
                <div class="foot">Total: <b>1,950.00</b></div>
            </div>
        </section>

        <section class="viewport">
            <div class="view-tabs"><button>Viewport</button></div>
            <div class="view-body">
                <div class="view-bar">
                    <div class="combo wide">
                        <select aria-label="Model"><option>20110616_bookTowerGhent Base</option></select><i class="arrow"></i>
                    </div>
                    <button class="insert">{@render icon("plus")}Insert</button>
                </div>
                <div class="canvas">
                    <svg viewBox="746 230 710 877" preserveAspectRatio="xMidYMid slice" role="img" aria-label="3D model">
                        <!-- ground -->
                        <path d="M746 854L892 780 929 762 1204 641 1245 625 1456 661V1107H1016L940 1081 939 1053 746 980z" fill={GREY} />
                        <path d="M1245 625L1456 661" stroke="#686868" stroke-width="2" />
                        <g transform="translate(740 780) scale(.459 .333)">
                            <path d="M143 136L420 320 428 645 242 568z" fill="#4c4c4c" />
                            <path d="M143 136L330 0H415V120z" fill="#525252" />
                            <path d="M433 820L770 815 772 980H602L435 903z" fill="#525252" />
                        </g>
                        <path d="M1204 641L1245 625 1420 665 1385 790 1204 712z" fill="#535353" />
                        <path d="M1204 790L1290 785 1456 830V1107H1204z" fill="#535353" />

                        <!-- tower shaft -->
                        <path d="M919 485L1102 514V1048L937 996 929 762z" fill={GREY} />
                        <path d="M1102 514L1207 462V500L1198 912 1102 994z" fill={DARK} />
                        <g transform="translate(900 500) scale(.357 .333)">
                            {#each slits as s}
                                <rect x={s.x} y={s.y} width="3" height={s.h} fill={DARK} />
                            {/each}
                            {#each seams as s}
                                <rect x={s.x} y={s.y} width="3" height={s.h} fill={GREY} />
                            {/each}
                        </g>

                        <!-- podium and steps -->
                        <g transform="translate(740 780) scale(.459 .333)">
                            <path d="M787 637L998 383V432L940 507H930L928 590 893 630 852 685 800 672V755L787 765z" fill={BROWN} />
                            <path d="M787 765L798 755V792L787 800z" fill={DARK} />
                            <path d="M862 546L878 528M893 510L908 492M922 472L934 458" stroke={ORANGE} stroke-width="3" />
                            <path d="M940 507L998 432V456L950 508z" fill={DARK_GREEN} />
                            <path d="M984 458L998 440V502H984z" fill={GREEN} />
                            <path d="M893 572L899 565V620H893z" fill={DARK_GREEN} />
                            <path d="M899 563h3v52h-3z" fill={ORANGE} />
                            <path d="M930 507L1080 560 1078 655 930 605z" fill={GREY} />
                            <path d="M964 488h3v26h-3zM977 478h3v40h-3zM934 520h3v50h-3zM997 530h4v18h-4zM997 575h3v45h-3zM1078 560h4v94h-4z" fill={DARK} />
                            <path d="M800 668L907 712V828L800 790z" fill={GREY} />
                            <path d="M1058 755L1210 838V955L1058 880z" fill={GREY} />
                            <path d="M907 712L922 698V815L907 828zM978 713L999 686V762L976 804zM1072 747L1088 723V754zM1113 788L1126 770V798zM1070 848l4-2-14 44h-3zM1210 838h4v118h-4zM788 968L815 980H788z" fill={DARK} />
                            <path d="M980 790L1070 840M970 805L1064 855M960 820L1060 870" stroke="#505050" stroke-width="3" />
                        </g>

                        <!-- low wing -->
                        <g transform="translate(900 500) scale(.357 .333)">
                            <path d="M1036 937L1362 640 1347 910 1262 993z" fill={BROWN} />
                            <path d="M1036 937L1362 640" stroke="#333" stroke-width="6" />
                            {#each [0, 1, 2, 3, 4, 5] as i}
                                <path d="M{1112 + i * 40} {904 - i * 36}l27-26v28l-27 24z" fill={DARK} />
                                <path d="M{1139 + i * 40} {876 - i * 36}v30l-27 24" fill="none" stroke={ORANGE} stroke-width="2.500" />
                            {/each}
                            <path d="M1070 948l28-28v28z" fill={DARK} />
                            {#each [0, 1, 2, 3] as i}
                                <path d="M{1190 + i * 38} {916 - i * 36}l26-26v70l-26 26z" fill={DARK} />
                                <path d="M{1217 + i * 38} {888 - i * 36}v74l-27 26" fill="none" stroke={ORANGE} stroke-width="2.500" />
                            {/each}
                            <path d="M1150 962l28-26v40z" fill={DARK} />
                            <path d="M1016 945L1045 937 1262 990 1560 1062V1080z" fill={GREY} />
                            <path d="M1016 945L1560 1079V1321L1008 1175z" fill={ORANGE} />
                            {#each [0, 1, 2, 3, 4] as i}
                                <path d="M{1129 + i * 96} {1013 + i * 24}l52 12v28l-52 -12z" fill={GREY} />
                                <path d="M{1113 + i * 95} {1083 + i * 24.5}l77 19v108l-77 -21z" fill={GREEN} />
                            {/each}
                        </g>

                        <!-- crown -->
                        <g transform="translate(905 355) scale(.333)">
                            <path d="M270 136L330 124 405 138V152L330 140zM465 132L500 118 545 122V134L500 128 465 142z" fill={ORANGE} />
                            <path d="M465 150L530 130 548 150V240L465 268z" fill={DARK} />
                            <path d="M740 160L810 145V175L740 195z" fill={ORANGE} />
                            {#each backFences as f}
                                <path d={f.d} fill="none" stroke={f.c} stroke-width={f.w} />
                            {/each}
                            <path d="M255 280L300 270 410 290V400L255 380z" fill={ORANGE} />
                            <path d="M280 275h14v100h-14z" fill={BROWN} />
                            {#each masts as [x, y, w, h]}
                                <rect {x} {y} width={w} height={h} fill={GREY} />
                                <rect x={x + w - 5} y={y + 12} width="5" height={h - 12} fill={DARK} />
                            {/each}
                            <path d="M219 375L412 402V448L219 415z" fill={ORANGE} />
                            <path d="M128 190L165 205V360H128z" fill={GREY} />
                            <path d="M115 186L145 180 240 205 235 215 115 200z" fill={ORANGE} />
                            <path d="M38 355L128 325V360z" fill={DARK_GREEN} />
                            <path d="M110 365L135 356 152 360V375z" fill={ORANGE} />
                            <path d="M38 355L152 372V405L38 390z" fill={GREEN} />
                            <path d="M150 240L208 250V414L150 405z" fill={GREY} />
                            <path d="M204 252L219 246V414H204z" fill={DARK} />
                            <path d="M135 232L155 226 216 238V248L205 254 135 244z" fill={ORANGE} />
                            <path d="M22 293L120 258 150 265V313z" fill={GREEN} />
                            <path d="M553 240L672 252V410L592 440 520 428 553 415z" fill={ORANGE} />
                            <path d="M471 288L552 252V418L530 428 471 425z" fill={DARK} />
                            <path d="M838 225L926 235 840 270z" fill={GREEN} />
                            <path d="M838 290L908 297V332L838 363z" fill={DARK_GREEN} />
                            <path d="M838 288L908 297 840 326z" fill={GREEN} />
                            <path d="M702 375L798 335V376L702 424z" fill={BROWN} />
                            <path d="M798 208L840 200V370L798 374z" fill={DARK} />
                            <path d="M800 210h12v162h-12z" fill={GREY} />
                            {#each frontFences as f}
                                <path d={f.d} fill="none" stroke={f.c} stroke-width={f.w} />
                            {/each}
                            <path d="M801 204L806 190 850 190V202L826 214 801 214z" fill={ORANGE} />
                            <path d="M672 265L704 255V425L672 432z" fill={DARK} />
                            <path d="M672 258L714 244V256L676 272z" fill={ORANGE} />
                            <path d="M411 278L471 288V454L411 442z" fill={GREY} />
                            <path d="M471 276L555 240V252L471 290z" fill={BROWN} />
                            <path d="M400 264L470 270 555 238 470 290 400 278z" fill={ORANGE} />
                            <path d="M471 420L592 437V475L471 455z" fill={GREEN} />
                            <path d="M592 437L672 403V437L592 475z" fill={DARK_GREEN} />
                            <path d="M450 355L553 320 690 337 598 377z" fill={GREEN} />
                            <path d="M25 391L155 408 340 438 592 477 700 430 920 328" fill="none" stroke={ORANGE} stroke-width="6" />
                        </g>

                        <!-- view cube -->
                        <ellipse cx="1396" cy="307" rx="38" ry="16" fill="none" stroke="#1e1e1e" stroke-width="7" />
                        <path d="M1368 272L1390 266 1421 269 1405 278z" fill="#3a3a3a" stroke="#111" />
                        <path d="M1368 272L1405 278 1404 318 1370 309z" fill="#333" stroke="#111" />
                        <path d="M1405 278L1421 269 1419 303 1404 318z" fill="#2d2d2d" stroke="#111" />
                        <g class="cube-text">
                            <text x="1373" y="297" transform="rotate(6 1373 297)">FRONT</text>
                            <text x="1408" y="301" class="tiny" transform="rotate(-48 1408 301)">RIGHT</text>
                            <text x="1390" y="273" class="tiny">TOP</text>
                        </g>

                        <!-- axes -->
                        <path d="M793 1061L808 1049 812 1051 805 1058z" fill="#5c5c5c" />
                        <path d="M793 1060L812 1065" stroke="#999" stroke-width="3" />
                        <path d="M811 1060L826 1068 809 1069z" fill="#999" />
                        <circle cx="793" cy="1061" r="4" fill="#888" />
                        <path d="M791 1040h4v18h-4zM793 1025L798 1042H788z" fill="#ff6a13" />
                    </svg>
                    <div class="view-tools">
                        {#each ["home", "look", "zoomwin", "zoom", "move", "rotate", "fit"] as name}
                            <button aria-label={name}>{@render icon(name)}</button>
                        {/each}
                    </div>
                </div>
                <div class="doc-tabs">
                    <button>20110616_bookTowerGhent Base {@render icon("x")}</button>
                </div>
            </div>
        </section>

        <div class="side">
            <section class="pane shapes">
                <div class="pane-head">
                    <h3>Shapes</h3>
                    {@render windowButtons()}
                </div>
                <div class="views">
                    <button>Plans</button>
                    <button>Takeoff</button>
                    <button class="current">Shapes</button>
                </div>
                <div class="tabs">
                    <button>{@render icon("planshapes")}Plan Shapes</button>
                    <button class="current">{@render icon("cube")}BIM Shapes</button>
                </div>
                <div class="box">
                    <div class="filter-bar">
                        <div class="combo">
                            <select aria-label="Grouping"><option>Group by Type</option></select><i class="arrow"></i>
                        </div>
                        <button class="filter">{@render icon("filter")}Filter<i class="caret"></i></button>
                    </div>
                    <div class="scroller framed">
                        <table class="grid tree">
                            <colgroup>
                                <col class="c14" /><col class="c14" /><col />
                                <col class="c60" /><col class="c60" /><col class="c40" /><col class="c22" />
                                <col class="c20" /><col class="c20" /><col class="c20" /><col class="c18" />
                            </colgroup>
                            <thead>
                                <tr>
                                    <th colspan="3">Description</th>
                                    <th>Initial Qu...</th>
                                    <th>Revised ...</th>
                                    <th>Unit</th>
                                    <th class="thick"></th>
                                    <th></th>
                                    <th></th>
                                    <th></th>
                                    <th class="last"></th>
                                </tr>
                            </thead>
                            <tbody>
                                <tr>
                                    <td class="twist"><i class="opened"></i></td>
                                    <td class="desc" colspan="2">20110616_bookTowerGhent B...</td>
                                    <td></td><td></td><td></td>
                                    <td class="thick"></td>
                                    <td></td><td></td>
                                    <td class="mark">{@render icon("eye")}</td>
                                    <td class="last"></td>
                                </tr>
                                {#each shapes as shape}
                                    <tr>
                                        <td class="none"></td>
                                        <td class="twist"><i class="closed"></i></td>
                                        <td class="desc">{shape.name}</td>
                                        <td></td><td></td><td></td>
                                        <td class="thick"></td>
                                        <td class="mark pen">{#if shape.edit}{@render icon("edit")}{/if}</td>
                                        <td></td>
                                        <td class="mark">{@render icon("eye")}</td>
                                        <td class="last"></td>
                                    </tr>
                                {/each}
                            </tbody>
                        </table>
                    </div>
                </div>
            </section>

            <section class="pane details">
                <div class="pane-head">
                    <h3>Details</h3>
                    {@render windowButtons()}
                </div>
                <p class="subject">: Supply Reo</p>
                <div class="search">
                    {@render icon("filter")}
                    <div class="combo">
                        <select aria-label="Category"><option>All</option></select><i class="arrow"></i>
                    </div>
                    <input type="text" aria-label="Search properties" />
                    <button aria-label="Clear">{@render icon("xthin")}</button>
                </div>
                <div class="detail-body">
                    <div class="detail-main">
                        <div class="general">
                            <h3>General</h3>
                            {@render icon("up")}
                        </div>
                        <div class="scroller">
                            <table class="grid props">
                                <thead>
                                    <tr><th>Property</th><th>Value</th></tr>
                                </thead>
                                <tbody>
                                    {#each properties as p}
                                        <tr class:locked={p.locked}>
                                            <td>{p.name}</td>
                                            <td class="val">{p.value}</td>
                                        </tr>
                                    {/each}
                                </tbody>
                            </table>
                        </div>
                    </div>
                    <div class="vscroll">
                        <button aria-label="Scroll up">{@render icon("up")}</button>
                        <span class="thumb short"></span>
                        <span class="track"></span>
                        <button aria-label="Scroll down">{@render icon("down")}</button>
                    </div>
                </div>
            </section>
        </div>
    </main>

    <footer>
        {@render icon("refresh")}
        <span>Last Refreshed: More than 1 minute ago</span>
        <span class="picked">1 Rate selected</span>
        <dl>
            {#each totals as t}
                <div style="width: {t.w}px"><dt>{t.label}</dt><dd>{t.value}</dd></div>
            {/each}
        </dl>
    </footer>
    <div class="taskbar"><i class="task"></i><i class="task-on"></i><span>15:11</span></div>
</div>

<style>
    :global(body) {
        margin: 0;
        overflow: hidden;
    }

    .app {
        --line: #a0a0a0;
        --soft: #d0d0d0;
        height: 100vh;
        display: flex;
        flex-direction: column;
        background: #efefef;
        color: #444;
        font-family: Roboto, "Liberation Sans", sans-serif;
        font-size: 11px;
        line-height: 13px;
    }

    .app * {
        box-sizing: border-box;
    }

    button,
    select,
    input {
        font: inherit;
        color: inherit;
        border: 0;
        padding: 0;
        margin: 0;
        background: none;
        border-radius: 0;
        outline: 0;
    }

    h1,
    h2,
    h3,
    p,
    dl,
    dd {
        margin: 0;
        font-size: 11px;
        font-weight: 400;
    }

    .icon {
        width: 16px;
        height: 16px;
        flex: none;
        display: block;
    }

    .caret {
        display: inline-block;
        border: 3px solid transparent;
        border-top-color: currentColor;
        border-bottom: 0;
    }

    /* title bar */
    header {
        position: relative;
        background: #0072c6;
        color: #fff;
        flex: none;
    }
    .edge {
        position: absolute;
        top: 0;
        left: 46%;
        width: 10%;
        height: 1px;
        background: #e6e6e6;
    }
    .titlebar {
        height: 37px;
        display: grid;
        grid-template-columns: 1fr auto 1fr;
    }
    .title-left {
        display: flex;
    }
    .quick {
        width: 394px;
        display: flex;
        align-items: center;
    }
    .quick button {
        width: 28px;
        display: flex;
        justify-content: center;
    }
    .quick .caret {
        margin: 0 7px 0 -2px;
    }
    .qsep {
        width: 1px;
        height: 16px;
        background: #8ac0ea;
        margin: 0 2px;
    }
    .context {
        width: 71px;
        background: #f78b0a;
        display: flex;
        align-items: center;
        justify-content: center;
        padding-bottom: 3px;
    }
    h1 {
        align-self: center;
        color: #78b6e6;
    }
    .window-buttons {
        display: flex;
        justify-content: flex-end;
    }
    .window-buttons button {
        width: 48px;
        display: flex;
        align-items: center;
        justify-content: center;
    }
    .window-buttons .icon {
        width: 14px;
        height: 14px;
    }
    nav {
        display: flex;
        height: 21px;
    }
    nav button {
        padding-top: 3px;
    }
    .home {
        background: #efefef;
        color: #444;
    }
    .manage {
        background: #005a9e;
        font-weight: 700;
    }
    .info {
        margin: 0 14px 0 auto;
    }

    /* ribbon */
    .ribbon {
        flex: none;
        display: flex;
        height: 93px;
        padding: 3px 0;
        border-bottom: 1px solid #c4c4c4;
    }
    .ribbon section {
        flex: none;
        display: flex;
        flex-direction: column;
        justify-content: space-between;
        border-right: 1px solid var(--soft);
        padding: 0 3px;
    }
    .ribbon h2 {
        text-align: center;
    }
    .body {
        display: flex;
        height: 68px;
    }
    .g-edit { width: 223px; }
    .g-takeoff { width: 270px; }
    .g-format { width: 201px; }
    .g-drawing { width: 131px; }
    .g-tools { width: 174px; }
    .g-insert { width: 375px; }
    .g-revisions { width: 79px; }
    .g-cubit { width: 141px; }
    .g-access { width: 112px; }
    .g-ref { width: 121px; }
    .ribbon .g-edit,
    .ribbon .g-insert {
        padding-left: 5px;
    }
    .g-revisions .body,
    .g-access .body {
        justify-content: center;
    }
    .big {
        display: flex;
        flex-direction: column;
        align-items: center;
        padding-top: 3px;
        gap: 5px;
        flex: none;
    }
    .big .icon {
        width: 32px;
        height: 32px;
    }
    .big .caret {
        margin-left: 4px;
        vertical-align: middle;
    }
    .under .caret {
        display: block;
        width: 0;
        margin: 4px auto 0;
        border-width: 2px;
        border-bottom: 0;
    }
    .on {
        background: #c4c4c4;
    }
    .off {
        color: #999;
    }
    .w44 { width: 44px; }
    .w48 { width: 48px; }
    .w52 { width: 52px; }
    .w56 { width: 56px; }
    .w64 { width: 64px; }
    .w66 { width: 66px; }
    .w70 { width: 70px; }
    .w82 { width: 82px; }
    .stack {
        display: flex;
        flex-direction: column;
        justify-content: space-around;
        padding: 1px 0 0 7px;
    }
    .small {
        display: flex;
        align-items: center;
        gap: 4px;
        height: 22px;
        white-space: nowrap;
    }
    .red .icon {
        color: #b81c1c;
    }
    .far {
        margin-left: 8px;
    }
    .two {
        padding-bottom: 1px;
    }
    .format {
        display: grid;
        grid-template-columns: 38px 51px 38px 55px;
        grid-template-rows: 20px 20px;
        row-gap: 9px;
        padding: 9px 0 0 6px;
        align-items: center;
    }
    .format label:nth-of-type(2n) {
        padding-left: 12px;
    }
    .collapse {
        margin: auto 10px 3px auto;
    }
    .collapse .icon {
        width: 12px;
        height: 12px;
    }

    .combo {
        position: relative;
        display: flex;
        height: 20px;
        border: 1px solid var(--line);
        background: #fff;
    }
    .combo select {
        appearance: none;
        flex: 1;
        min-width: 0;
        padding: 0 18px 0 2px;
        font-size: 11px;
    }
    .arrow {
        position: absolute;
        right: 0;
        top: 0;
        width: 16px;
        height: 18px;
        border-left: 1px solid var(--line);
        pointer-events: none;
    }
    .arrow::after {
        content: "";
        position: absolute;
        left: 4px;
        top: 7px;
        border: 4px solid transparent;
        border-top-color: #666;
        border-bottom: 0;
    }
    .fill-blue,
    .hatch,
    .stroke {
        position: absolute;
        left: 6px;
        top: 4px;
        width: 22px;
        height: 10px;
        border: 1px solid #333;
        background: #00f;
        pointer-events: none;
    }
    .hatch {
        left: 9px;
        top: 1px;
        width: 17px;
        height: 16px;
        border: 0;
        background: repeating-linear-gradient(125deg, #fff 0 2px, #1e88d2 2px 3px);
    }
    .stroke {
        left: 2px;
        top: 8px;
        width: 31px;
        height: 2px;
        border: 0;
        background: #888;
    }

    .formula {
        flex: none;
        display: flex;
        align-items: center;
        height: 20px;
        padding-right: 2px;
    }
    .f-kind {
        width: 84px;
        text-align: center;
    }
    .f-cell {
        width: 152px;
        text-align: center;
    }
    .fx {
        width: 46px;
        padding-left: 18px;
        text-align: center;
        font: italic 15px/18px "Liberation Serif", serif;
        color: #666;
    }
    .formula button {
        width: 24px;
        height: 19px;
        display: flex;
        align-items: center;
        justify-content: center;
        border-right: 1px solid #666;
        border-bottom: 1px solid #666;
        color: #777;
    }
    .formula button .icon {
        width: 12px;
        height: 12px;
    }
    .formula input {
        flex: 1;
        height: 20px;
        background: #fff;
        padding-left: 5px;
    }

    main {
        flex: 1;
        min-height: 0;
        display: grid;
        grid-template-columns: minmax(0, 735fr) minmax(0, 720fr) minmax(0, 453fr);
        grid-template-rows: minmax(0, 1fr);
        gap: 4px;
        padding: 1px 2px 2px;
    }
    .pane {
        border: 1px solid var(--line);
        display: flex;
        flex-direction: column;
        min-height: 0;
        padding: 0 1px 1px;
    }
    .pane-head {
        display: flex;
        align-items: center;
        justify-content: space-between;
        height: 36px;
        padding: 0 11px 2px;
        flex: none;
    }
    h3 {
        font-size: 14px;
        line-height: 18px;
    }
    .pane-buttons {
        display: flex;
        gap: 9px;
    }
    .pane-buttons .icon {
        width: 10px;
        height: 10px;
    }
    .black {
        color: #000;
    }
    .views {
        display: flex;
        height: 26px;
        flex: none;
        border-bottom: 1px solid var(--line);
        padding-left: 3px;
    }
    .views button {
        padding: 1px 5px 0;
    }
    .views .current {
        background: #d8d8d8;
    }
    .box {
        border: 1px solid #bdbdbd;
        display: flex;
        flex-direction: column;
        min-height: 0;
    }
    .upper {
        border-top: 0;
        flex: 590;
    }
    .lower {
        flex: 270;
    }
    .toolbar {
        display: flex;
        align-items: center;
        height: 29px;
        padding-left: 1px;
        flex: none;
    }
    .tool {
        width: 26px;
        height: 24px;
        display: flex;
        align-items: center;
        justify-content: center;
        color: #999;
    }
    .tool.dark {
        color: #444;
    }
    .tool.active {
        background: #c4c4c4;
    }
    .drop {
        width: 17px;
        color: #888;
    }
    .sep {
        width: 1px;
        height: 22px;
        margin: 0 3px;
        background: #c8c8c8;
    }

    /* grids */
    .sheet {
        display: flex;
        flex: 1;
        min-height: 0;
        border-top: 1px solid var(--line);
    }
    .scroller {
        flex: 1;
        min-width: 0;
        min-height: 0;
        overflow: hidden;
        background: #fff;
    }
    .grid {
        width: 100%;
        table-layout: fixed;
        border-collapse: separate;
        border-spacing: 0;
    }
    .c14 { width: 14px; }
    .c15 { width: 15px; }
    .c18 { width: 18px; }
    .c20 { width: 20px; }
    .c22 { width: 22px; }
    .c25 { width: 25px; }
    .c36 { width: 36px; }
    .c40 { width: 40px; }
    .c41 { width: 41px; }
    .c45 { width: 45px; }
    .c53 { width: 53px; }
    .c56 { width: 56px; }
    .c60 { width: 60px; }
    .c64 { width: 64px; }
    .c75 { width: 75px; }
    .c81 { width: 81px; }
    th {
        height: 20px;
        padding: 0 3px;
        text-align: left;
        font-weight: 400;
        background: #efefef;
        border-right: 1px solid var(--line);
        border-bottom: 1px solid var(--line);
        white-space: nowrap;
    }
    td {
        height: 19px;
        padding: 0 3px;
        border-right: 1px solid var(--soft);
        border-bottom: 1px solid var(--soft);
        white-space: nowrap;
    }
    .tall td {
        height: 31px;
    }
    td.desc {
        vertical-align: top;
        padding: 2px 0 0 5px;
        white-space: normal;
    }
    td.desc.single {
        white-space: nowrap;
    }
    td.num {
        background: #efefef;
        color: #000;
        font-size: 12px;
        padding-left: 8px;
        border-right-color: var(--line);
        border-bottom: 0;
    }
    .r {
        text-align: right;
    }
    .blue {
        color: #00f;
    }
    td.total {
        padding: 0;
        text-align: right;
        border-right-color: var(--line);
        overflow: hidden;
    }
    .group td {
        background: #68aadd;
        color: #fff;
        font-weight: 700;
    }
    .group .num {
        background: #efefef;
        color: #000;
    }
    .group .total span {
        margin-right: -4px;
    }
    .group .twist,
    .tree .twist {
        background: #fff;
        padding: 0 0 0 5px;
        border-bottom: 0;
    }
    td.blank,
    td.none {
        border-bottom: 0;
    }
    td.none {
        border-right: 0;
    }
    .active td:not(.num, .blank) {
        background: #ebfaeb;
    }
    .green td:not(.num, .blank) {
        background: #dfffdf;
        border-color: #b4d8b4;
    }
    td.mark {
        padding: 0 0 0 2px;
    }
    .closed {
        display: block;
        width: 0;
        border: 4px solid transparent;
        border-left-color: #555;
        border-right: 0;
    }
    .opened {
        display: block;
        width: 0;
        border: 3px solid transparent;
        border-right-color: #444;
        border-bottom-color: #444;
    }
    .vscroll {
        width: 18px;
        flex: none;
        display: flex;
        flex-direction: column;
        background: #e9e9e9;
    }
    .vhead {
        height: 20px;
        flex: none;
        background: #efefef;
        border-bottom: 1px solid var(--line);
    }
    .vscroll button,
    .hscroll button {
        width: 17px;
        height: 17px;
        flex: none;
        display: flex;
        align-items: center;
        justify-content: center;
    }
    .vscroll .icon,
    .hscroll .icon {
        width: 10px;
        height: 10px;
    }
    .vscroll .thumb {
        flex: 178;
        background: #cdcdcd;
    }
    .vscroll .track {
        flex: 271;
    }
    .vscroll .short {
        flex: 133;
    }
    .short + .track {
        flex: 121;
    }
    .hscroll {
        display: flex;
        height: 18px;
        flex: none;
        background: #e9e9e9;
        border-bottom: 1px solid #bdbdbd;
    }
    .hscroll .thumb {
        flex: 652;
        background: #cdcdcd;
    }
    .hscroll .track {
        flex: 24;
    }
    .corner {
        width: 18px;
        background: #efefef;
    }
    .crumbs {
        display: flex;
        align-items: flex-start;
        height: 36px;
        padding: 9px 8px 0 7px;
        gap: 12px;
        flex: none;
    }
    .crumbs .closed {
        margin: 3px 0 0 0;
    }
    a {
        color: inherit;
        text-decoration: none;
    }
    .sum {
        margin: 3px 0 0 auto;
        color: #222;
    }
    .sum b,
    .foot b {
        font-size: 12px;
        margin-left: 11px;
        color: #000;
    }
    .splitter {
        height: 13px;
        display: flex;
        align-items: center;
        justify-content: center;
        flex: none;
    }
    .splitter .icon {
        width: 9px;
        height: 9px;
    }
    .tabs {
        display: flex;
        align-items: flex-end;
        flex: none;
        height: 26px;
        position: relative;
    }
    .tabs button {
        display: flex;
        align-items: center;
        gap: 2px;
        height: 24px;
        padding: 0 10px;
    }
    .tabs .current {
        border: 1px solid #bdbdbd;
        border-bottom: 0;
        background: #efefef;
        margin-bottom: -1px;
        height: 25px;
        color: #222;
    }
    .tabs :global(.end) {
        width: 14px;
        height: 14px;
        margin: 0 3px 9px auto;
    }
    .lower .scroller {
        border: 1px solid var(--line);
    }
    .foot {
        height: 20px;
        flex: none;
        padding: 3px 6px 0;
        text-align: right;
        color: #222;
    }

    /* viewport */
    .viewport {
        display: flex;
        flex-direction: column;
        min-height: 0;
        padding-top: 2px;
    }
    .view-tabs {
        border-bottom: 2px solid #a6a6a6;
        flex: none;
    }
    .view-tabs button {
        width: 66px;
        height: 21px;
        background: #a6a6a6;
        color: #fff;
        display: block;
    }
    .view-body {
        flex: 1;
        min-height: 0;
        display: flex;
        flex-direction: column;
        border: 1px solid var(--line);
        border-top: 0;
        padding: 3px 3px 5px;
    }
    .view-bar {
        display: flex;
        gap: 6px;
        height: 29px;
        flex: none;
    }
    .view-bar .combo {
        flex: 1;
    }
    .insert {
        width: 76px;
        height: 22px;
        border: 1px solid var(--line);
        display: flex;
        align-items: center;
        gap: 15px;
        padding-left: 2px;
    }
    .insert .icon {
        width: 14px;
        height: 14px;
    }
    .canvas {
        position: relative;
        flex: 1;
        min-height: 0;
        border: 1px solid var(--line);
        background: #000;
    }
    .canvas > svg {
        position: absolute;
        width: 100%;
        height: 100%;
    }
    .cube-text {
        fill: #888;
        font-size: 8px;
        font-weight: 700;
    }
    .tiny {
        font-size: 5px;
    }
    .view-tools {
        position: absolute;
        top: 9px;
        left: 0;
        right: 6px;
        display: flex;
        justify-content: center;
        gap: 13px;
    }
    .view-tools .icon {
        width: 24px;
        height: 24px;
    }
    .doc-tabs {
        height: 22px;
        flex: none;
    }
    .doc-tabs button {
        height: 22px;
        border: 1px solid #bdbdbd;
        border-top: 0;
        padding: 0 7px 0 10px;
        display: flex;
        align-items: center;
        gap: 12px;
        color: #222;
    }
    .doc-tabs .icon {
        width: 9px;
        height: 9px;
        color: #777;
    }

    /* side panes */
    .side {
        display: flex;
        flex-direction: column;
        gap: 4px;
        min-height: 0;
    }
    .shapes {
        flex: 594;
    }
    .details {
        flex: 366;
    }
    .shapes .views button {
        padding: 1px 6px 0;
    }
    .shapes .box {
        flex: 1;
        padding: 4px 3px;
    }
    .filter-bar {
        display: flex;
        justify-content: space-between;
        height: 27px;
        flex: none;
    }
    .filter-bar .combo {
        width: 128px;
    }
    .filter {
        display: flex;
        align-items: center;
        gap: 6px;
        height: 20px;
        padding-right: 4px;
    }
    .filter .icon {
        width: 14px;
        height: 14px;
    }
    .framed {
        border: 1px solid var(--line);
    }
    .tree td.thick,
    .tree th.thick {
        border-right: 2px solid #a0a0a0;
    }
    .tree .last {
        border-right: 0;
    }
    .tree td.last {
        border-bottom: 0;
    }
    .pen .icon {
        width: 14px;
        height: 14px;
        margin-left: 2px;
    }
    .subject {
        height: 13px;
        padding-left: 5px;
        margin-top: 2px;
        flex: none;
        overflow: hidden;
    }
    .search {
        display: flex;
        align-items: center;
        gap: 6px;
        padding: 1px 4px 0 4px;
        height: 22px;
        flex: none;
    }
    .search .icon {
        width: 14px;
        height: 14px;
    }
    .search .combo {
        width: 100px;
        background: #efefef;
    }
    .search input {
        flex: 1;
        height: 20px;
        border: 1px solid var(--line);
        background: #fff;
    }
    .search button {
        padding: 0 2px 0 4px;
    }
    .search button .icon {
        width: 12px;
        height: 12px;
    }
    .detail-body {
        flex: 1;
        min-height: 0;
        display: flex;
        gap: 4px;
        padding-top: 3px;
    }
    .detail-main {
        flex: 1;
        min-width: 0;
        display: flex;
        flex-direction: column;
        padding-left: 4px;
    }
    .general {
        height: 35px;
        flex: none;
        display: flex;
        align-items: center;
        justify-content: space-between;
        padding: 0 7px 2px 1px;
    }
    .general .icon {
        width: 10px;
        height: 10px;
    }
    .detail-main .scroller {
        border: 1px solid var(--line);
        border-bottom: 0;
    }
    .props td {
        height: 20px;
        color: #222;
        padding: 0 0 2px 4px;
    }
    .props td.val {
        padding: 1px 0 0 4px;
    }
    .props .locked td {
        color: #888;
        font-style: italic;
    }

    /* status */
    footer {
        flex: none;
        height: 22px;
        display: flex;
        align-items: center;
        border-top: 1px solid #bdbdbd;
        padding-left: 6px;
        gap: 4px;
    }
    .picked {
        margin-left: 8px;
    }
    dl {
        margin-left: auto;
        display: flex;
    }
    dl div {
        display: flex;
        justify-content: space-between;
        align-items: center;
        height: 18px;
        padding: 0 7px;
        border-left: 1px solid #c4c4c4;
    }
    dl div:first-child {
        border: 0;
    }
    .taskbar {
        flex: none;
        height: 8px;
        background: #1b1b1b;
        overflow: hidden;
        display: flex;
        color: #fff;
    }
    .task {
        width: 288px;
        margin-left: 48px;
        background: #f0f0f0;
    }
    .task-on {
        width: 48px;
        margin-left: 346px;
        background: #5a5a5a;
    }
    .taskbar span {
        margin: 3px 74px 0 auto;
    }
</style>
